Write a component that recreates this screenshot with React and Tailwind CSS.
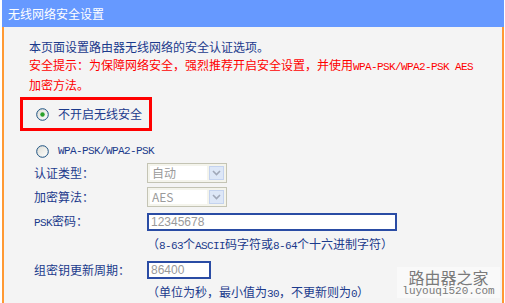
import React from 'react';

const M = ({ children }) => (
    <span className="font-['Liberation_Mono',monospace] text-[11px] tracking-[-0.6px]">{children}</span>
);

const Radio = ({ checked }) => (
    <svg width="13" height="13" viewBox="0 0 13 13" className="shrink-0">
        <defs>
            <linearGradient id={checked ? 'rg1' : 'rg2'} x1="0" y1="0" x2="1" y2="1">
                <stop offset="0" stopColor="#dcdcd4" />
                <stop offset="1" stopColor="#ffffff" />
            </linearGradient>
        </defs>
        <circle cx="6.5" cy="6.5" r="5.8" fill={`url(#${checked ? 'rg1' : 'rg2'})`} stroke="#1c5180" strokeWidth="1" />
        {checked && <circle cx="6.5" cy="6.5" r="2.2" fill="#2aa12a" />}
    </svg>
);

const Select = ({ value }) => (
    <div className="w-[80px] h-[20px] border border-[#c4c4b4] bg-[#f4f4ec] p-[2px] flex">
        <div className="flex-1 bg-white text-[#9a9a9a] text-[12px] leading-[14px] pl-[2px]">{value}</div>
        <div className="w-[15px] bg-[#dde7f7] border border-[#c4d3ef] flex items-center justify-center ml-[2px]">
            <svg width="9" height="6" viewBox="0 0 9 6">
                <path d="M1 1 L4.5 4.5 L8 1" fill="none" stroke="#a0a8b8" strokeWidth="1.6" />
            </svg>
        </div>
    </div>
);

const Row = ({ label, children, className = '' }) => (
    <div className={`flex items-center pl-[30px] ${className}`}>
        <div className="w-[113px] text-[#1b3a8c]">{label}</div>
        {children}
    </div>
);

export default function App() {
    return (
        <div className="w-[505px] h-[303px] overflow-hidden bg-white font-['Noto_Sans_CJK_SC',sans-serif] text-[12px]">
            <div className="ml-[2px] w-[502px] h-[303px] flex flex-col relative">
                {/* Title */}
                <div className="h-[29px] bg-[#6699ff] text-white flex items-center pl-[6px] text-[12px]">
                    无线网络安全设置
                </div>

                {/* Body */}
                <div className="flex-1 bg-[#f4f4f4] border-l-2 border-r-2 border-[#ff9933] pt-[11px] leading-[18px]">
                    <div className="pl-[25px] text-[#1b3a8c]">本页面设置路由器无线网络的安全认证选项。</div>
                    <div className="pl-[25px] pr-[20px] text-[#ff0000]">
                        安全提示：为保障网络安全，强烈推荐开启安全设置，并使用<M>WPA-PSK/WPA2-PSK AES</M>
                        <br />
                        加密方法。
                    </div>

                    <div className="ml-[16px] mt-[3px] w-[132px] h-[34px] border-[3px] border-[#ff0000] flex items-center pl-[13px] gap-[9px] text-[#1b3a8c]">
                        <Radio checked />
                        <span>不开启无线安全</span>
                    </div>

                    <div className="mt-[11px] h-[18px] flex items-center pl-[32px] gap-[9px] text-[#1b3a8c]">
                        <Radio />
                        <M>WPA-PSK/WPA2-PSK</M>
                    </div>

                    <Row label="认证类型：" className="mt-[3px] h-[20px]">
                        <Select value="自动" />
                    </Row>
                    <Row label="加密算法：" className="mt-[4px] h-[20px]">
                        <Select value="AES" />
                    </Row>
                    <Row label={<><M>PSK</M>密码：</>} className="mt-[6px] h-[18px]">
                        <div className="w-[250px] h-[18px] border-2 border-[#2a4ca4] bg-white text-[#9a9a9a] text-[12px] leading-[14px] pl-[2px] font-['Liberation_Sans',sans-serif]">
                            12345678
                        </div>
                    </Row>
                    <div className="mt-[4px] pl-[143px] text-[#1b3a8c]">
                        （<M>8-63</M>个<M>ASCII</M>码字符或<M>8-64</M>个十六进制字符）
                    </div>
                    <Row label="组密钥更新周期：" className="mt-[6px] h-[18px]">
                        <div className="w-[64px] h-[18px] border-2 border-[#2a4ca4] bg-white text-[#9a9a9a] text-[12px] leading-[14px] pl-[2px] font-['Liberation_Sans',sans-serif]">
                            86400
                        </div>
                    </Row>
                    <div className="mt-[4px] pl-[143px] text-[#1b3a8c]">
                        （单位为秒，最小值为<M>30</M>，不更新则为<M>0</M>）
                    </div>
                </div>

                {/* Watermark */}
                <div className="absolute left-[395px] top-[267px] w-[103px] h-[31px] bg-[#fafafa]/90 flex flex-col items-center justify-center text-[#7a7a7a] leading-none">
                    <div className="text-[16px] tracking-[0px]">路由器之家</div>
                    <div className="font-['Liberation_Mono',monospace] text-[11px] mt-[1px]">luyouqi520.com</div>
                </div>
            </div>
        </div>
    );
}
